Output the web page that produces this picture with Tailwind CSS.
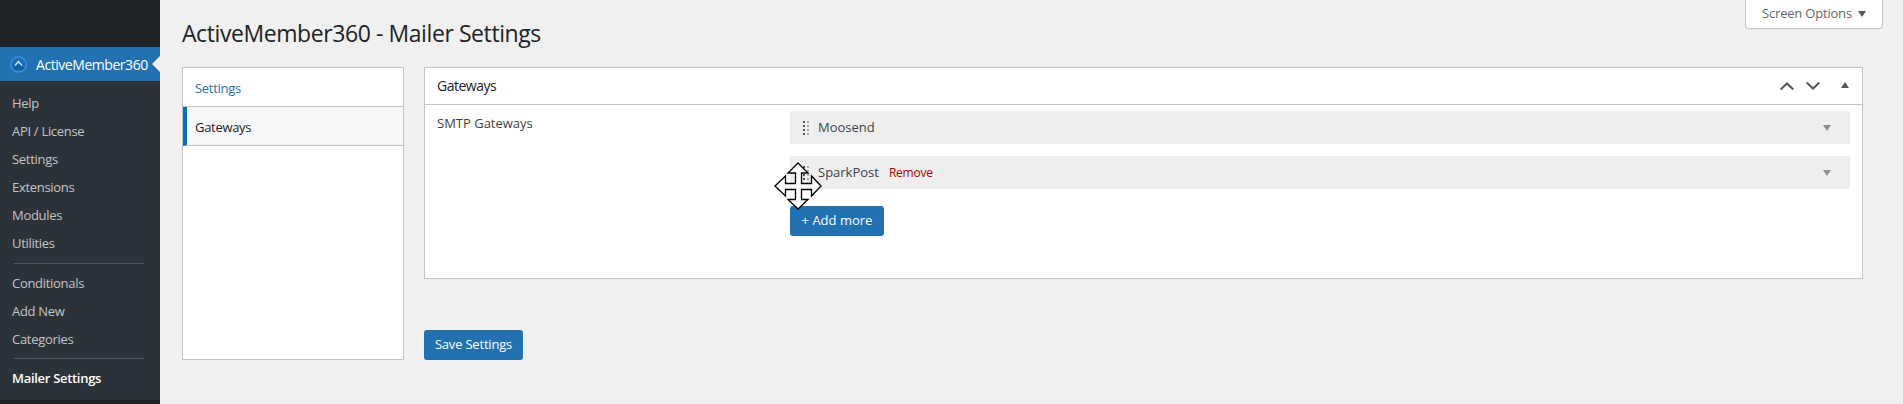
<!DOCTYPE html>
<html><head><meta charset="utf-8">
<script src="https://cdn.jsdelivr.net/npm/@tailwindcss/browser@4"></script>
</head>
<body class="m-0 bg-[#f0f0f1]">
<div class="relative flex h-[404px] w-[1903px] overflow-hidden bg-[#f0f0f1] font-['Open_Sans',sans-serif] text-[13px] text-[#3c434a]">
  <aside class="flex h-full w-[160px] shrink-0 flex-col bg-[#1d2327]">
    <div class="h-[47px]"></div>
    <div class="relative flex h-[34px] items-center bg-[#2271b1] pl-[10px] text-[14px] tracking-[-0.45px] text-[#fff]">
      <svg class="mr-[9px] size-[17px] shrink-0" viewBox="0 0 17 17"><circle cx="8.500" cy="8.500" r="7.700" fill="#1a6cb8" stroke="#3d9be0" stroke-width="1.200"/><path d="M2.500 12.500C5 14.500 12 14.500 14.500 12.500L8.500 8Z" fill="#0f5ea8"/><path d="M5 9.500 8.500 5.500 12 9.500" fill="none" stroke="#d5e9f9" stroke-width="1.200"/></svg>
      <span>ActiveMember360</span>
      <span class="absolute right-0 top-[9px] size-0 border-y-[8px] border-r-[8px] border-y-transparent border-r-[#f0f0f1]"></span>
    </div>
    <nav class="flex h-[319px] flex-col bg-[#2c3338] pt-[9px] tracking-[-0.3px] text-[#c3c4c7]">
      <a class="flex h-[28px] items-center pl-[12px]">Help</a>
      <a class="flex h-[28px] items-center pl-[12px]">API / License</a>
      <a class="flex h-[28px] items-center pl-[12px]">Settings</a>
      <a class="flex h-[28px] items-center pl-[12px]">Extensions</a>
      <a class="flex h-[28px] items-center pl-[12px]">Modules</a>
      <a class="flex h-[28px] items-center pl-[12px]">Utilities</a>
      <div class="mb-[6px] ml-[14px] mt-[5px] h-px w-[130px] bg-[#50565b]"></div>
      <a class="flex h-[28px] items-center pl-[12px]">Conditionals</a>
      <a class="flex h-[28px] items-center pl-[12px]">Add New</a>
      <a class="flex h-[28px] items-center pl-[12px]">Categories</a>
      <div class="mb-[6px] ml-[14px] mt-[4px] h-px w-[130px] bg-[#50565b]"></div>
      <a class="flex h-[28px] items-center pl-[12px] font-semibold text-[#fff]">Mailer Settings</a>
    </nav>
  </aside>
  <main class="min-w-0 flex-1 pl-[22px] pr-[40px]">
    <h1 class="mt-[18px] h-[31px] text-[23px] font-normal leading-[31px] tracking-[-0.42px] text-[#1d2327]">ActiveMember360 - Mailer Settings</h1>
    <div class="mt-[18px] flex gap-[20px]">
      <div class="h-[293px] w-[222px] shrink-0 border border-[#c3c4c7] bg-[#fff]">
        <div class="flex h-[39px] items-center border-b border-[#c3c4c7] pl-[12px] pt-[3px] tracking-[-0.3px] text-[#2271b1]">Settings</div>
        <div class="flex h-[39px] items-center border-b border-l-[4px] border-[#c3c4c7] border-l-[#0073aa] bg-[#f6f7f7] pl-[8px] pt-[3px] tracking-[-0.3px] text-[#1d2327]">Gateways</div>
      </div>
      <div class="flex-1">
        <section class="h-[212px] border border-[#c3c4c7] bg-[#fff]">
          <header class="flex h-[37px] items-center justify-between border-b border-[#c3c4c7] pl-[12px] pr-[13px]">
            <h2 class="pb-[2px] text-[14px] font-medium tracking-[-0.5px] text-[#1d2327]">Gateways</h2>
            <div class="flex items-center">
              <svg width="14" height="8" viewBox="0 0 14 8"><path d="M.7 7.500 7 1.500l6.300 6" fill="none" stroke="#50575e" stroke-width="2"/></svg>
              <svg class="ml-[12px]" width="14" height="8" viewBox="0 0 14 8"><path d="M.7.500 7 6.500l6.300-6" fill="none" stroke="#50575e" stroke-width="2"/></svg>
              <span class="mb-[2px] ml-[21px] size-0 border-x-[4px] border-b-[6px] border-x-transparent border-b-[#50575e]"></span>
            </div>
          </header>
          <div class="flex px-[12px] pt-[5px]">
            <div class="w-[353px] shrink-0 pt-[1px] leading-[24px]">SMTP Gateways</div>
            <div class="flex-1 pt-[1px]">
              <div class="flex h-[33px] items-center bg-[#eee] pl-[13px] pr-[19px]">
                <svg class="mr-[9px]" width="6" height="14" viewBox="0 0 6 14"><g fill="#50575e"><rect width="2" height="2"/><rect width="2" height="2" y="4"/><rect width="2" height="2" y="8"/><rect width="2" height="2" y="12"/></g><g fill="#a7aaad"><rect width="2" height="2" x="4"/><rect width="2" height="2" x="4" y="4"/><rect width="2" height="2" x="4" y="8"/><rect width="2" height="2" x="4" y="12"/></g></svg>
                <span>Moosend</span>
                <span class="ml-auto size-0 border-x-[4px] border-t-[6px] border-x-transparent border-t-[#8c8f94]"></span>
              </div>
              <div class="mt-[12px] flex h-[33px] items-center bg-[#eee] pl-[13px] pr-[19px]">
                <svg class="mr-[9px]" width="6" height="14" viewBox="0 0 6 14"><g fill="#50575e"><rect width="2" height="2"/><rect width="2" height="2" y="4"/><rect width="2" height="2" y="8"/><rect width="2" height="2" y="12"/></g><g fill="#a7aaad"><rect width="2" height="2" x="4"/><rect width="2" height="2" x="4" y="4"/><rect width="2" height="2" x="4" y="8"/><rect width="2" height="2" x="4" y="12"/></g></svg>
                <span>SparkPost</span>
                <span class="ml-[10px] text-[12px] tracking-[-0.25px] text-[#a00]">Remove</span>
                <span class="ml-auto size-0 border-x-[4px] border-t-[6px] border-x-transparent border-t-[#8c8f94]"></span>
              </div>
              <button class="mt-[17px] flex h-[30px] w-[94px] items-center justify-center rounded-[3px] bg-[#2271b1] text-[13px] text-[#fff]">+ Add more</button>
            </div>
          </div>
        </section>
        <button class="mt-[51px] flex h-[30px] w-[99px] items-center justify-center rounded-[3px] bg-[#2271b1] text-[13px] tracking-[-0.2px] text-[#fff]">Save Settings</button>
      </div>
    </div>
  </main>
  <div class="absolute right-[20px] top-0 flex h-[29px] w-[138px] items-center justify-center gap-[6px] rounded-b-[4px] border border-t-0 border-[#c3c4c7] bg-[#fff] tracking-[-0.2px] text-[#646970]">
    <span>Screen Options</span>
    <span class="size-0 border-x-[4px] border-t-[6px] border-x-transparent border-t-[#50575e]"></span>
  </div>
  <svg class="absolute left-[770px] top-[158px]" width="56" height="56" viewBox="0 0 56 56"><path d="M28 5 38 15H31.500V25.500H41.500V18L51 28 41.500 38V31.500H31.500V41.500H38L28 51 18 41.500H25.500V31.500H15.500V38L5 28 15.500 18V25.500H25.500V15H18Z" fill="#fff" stroke="#000" stroke-width="1.300"/></svg>
</div>
</body></html>
